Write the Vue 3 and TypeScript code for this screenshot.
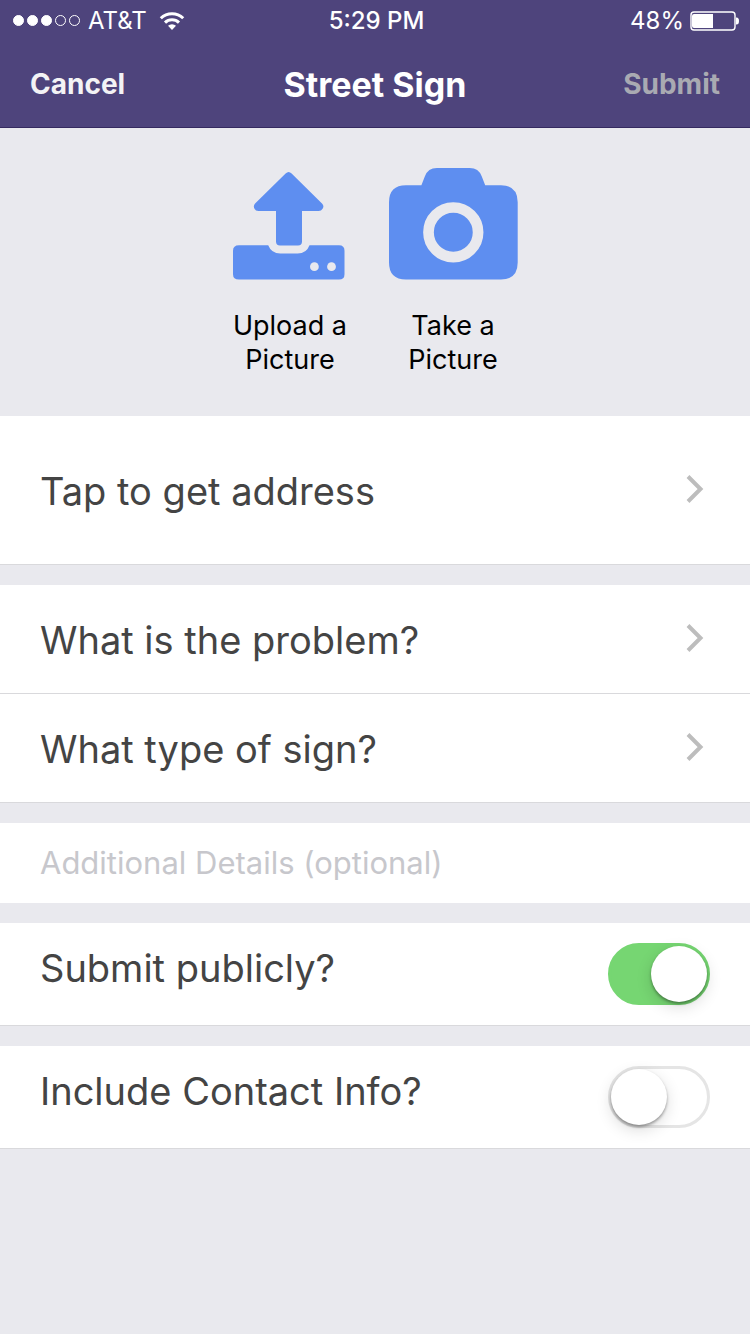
<script setup lang="ts">
import { ref } from 'vue'

const fields = [
  ['Tap to get address'],
  ['What is the problem?', 'What type of sign?'],
]
const signal = [true, true, true, false, false]
const details = ref('')
const isPublic = ref(true)
const includeContact = ref(false)
</script>

<template>
  <div class="screen">
    <header class="top">
      <div class="status">
        <div class="carrier">
          <span class="dots"><i v-for="(on, n) in signal" :key="n" :class="{ on }"></i></span>
          <span>AT&amp;T</span>
          <svg class="wifi" viewBox="0 0 26 20" width="26" height="20" aria-hidden="true">
            <g fill="none" stroke="#fff" stroke-width="3">
              <path d="M1.800 7.200a16 16 0 0 1 22.400 0" />
              <path d="M6 11.600a10 10 0 0 1 14 0" />
            </g>
            <path d="M13 19l-4-4.200a5.800 5.800 0 0 1 8 0z" fill="#fff" />
          </svg>
        </div>
        <div class="time">5:29 PM</div>
        <div class="power">
          <span>48%</span>
          <svg viewBox="0 0 50 20" width="50" height="20" aria-hidden="true">
            <rect x="1" y="1" width="44" height="18" rx="3" fill="none" stroke="#fff" stroke-width="1.400" />
            <path d="M4 3h19v14H4a2 2 0 0 1-2-2V5a2 2 0 0 1 2-2z" fill="#fff" />
            <path d="M46 6.500h.5a2.500 3.500 0 0 1 0 7H46z" fill="#fff" />
          </svg>
        </div>
      </div>
      <nav class="nav">
        <button type="button" class="cancel">Cancel</button>
        <h1>Street Sign</h1>
        <button type="button" class="submit" disabled>Submit</button>
      </nav>
    </header>

    <section class="photos">
      <button type="button" class="photo">
        <svg viewBox="232 168 116 112" width="116" height="112" fill="#5e8ef0" aria-hidden="true">
          <path d="M285.600 173.600q3-3 6 0L322 203.600q2.500 2.600.6 5.200-1.300 2.200-4 2.200H302v30.500q0 4-4 4h-18q-4 0-4-4V211h-17.500q-3 0-4-2.200-1.600-2.600.6-5.200z" />
          <path d="M239 245.300h29.200q3.300 8.300 12 8.300h17.500q8.700 0 11.800-8.300h29.500q5.500 0 5.500 5.500v23.500q0 5.300-5.500 5.300H239q-6 0-6-5.300v-23.500q0-5.500 6-5.500z" />
          <circle cx="314.400" cy="266.700" r="4.400" fill="#e9e9ee" />
          <circle cx="331.500" cy="266.700" r="4.400" fill="#e9e9ee" />
        </svg>
        <span>Upload a<br />Picture</span>
      </button>
      <button type="button" class="photo">
        <svg viewBox="388 168 130 112" width="130" height="112" fill="#5e8ef0" aria-hidden="true">
          <path d="M406 185.200h15.400l3.400-8.800q3.200-8.400 12-8.400h33q8.800 0 12 8.400l3.400 8.800H501q16.700 0 16.700 17v60.400q0 17-16.700 17h-95q-17 0-17-17v-60.400q0-17 17-17z" />
          <circle cx="453.300" cy="232.300" r="24.800" fill="none" stroke="#e9e9ee" stroke-width="10.700" />
        </svg>
        <span>Take a<br />Picture</span>
      </button>
    </section>

    <form class="groups" @submit.prevent>
      <div v-for="(group, g) in fields" :key="g" class="group" :class="{ address: g === 0 }">
        <button v-for="label in group" :key="label" type="button" class="row">
          <span>{{ label }}</span>
          <svg viewBox="0 0 18 30" width="18" height="30" aria-hidden="true">
            <path d="M2 1.500L14.500 14 2 26.500" fill="none" stroke="#bdbdbd" stroke-width="4" />
          </svg>
        </button>
      </div>
      <input v-model="details" class="details" type="text" placeholder="Additional Details (optional)" aria-label="Additional Details (optional)" />
      <label class="toggle">
        <span>Submit publicly?</span>
        <input v-model="isPublic" type="checkbox" role="switch" />
      </label>
      <label class="toggle">
        <span>Include Contact Info?</span>
        <input v-model="includeContact" type="checkbox" role="switch" />
      </label>
    </form>
  </div>
</template>

<style>
body {
  background: #e9e9ee;
}
</style>

<style scoped>
.screen {
  min-height: 100vh;
  background: #e9e9ee;
  font-family: Inter, Roboto, sans-serif;
  color: #444;
}
button {
  border: 0;
  padding: 0;
  background: none;
  font: inherit;
  color: inherit;
}
svg {
  display: block;
  flex: none;
}
.top {
  background: #4e447c;
  color: #fff;
  border-bottom: 1px solid #352a60;
}
.status {
  display: grid;
  grid-template-columns: 1fr auto 1fr;
  align-items: center;
  height: 41px;
  padding: 0 10px 0 13px;
  font-size: 24px;
}
.carrier,
.power {
  display: flex;
  align-items: center;
}
.carrier {
  gap: 8px;
}
.wifi {
  margin-left: 4px;
}
.power {
  justify-content: flex-end;
  gap: 6px;
}
.time {
  font-weight: 500;
}
.dots {
  display: flex;
  gap: 3px;
}
.dots i {
  box-sizing: border-box;
  width: 11px;
  height: 11px;
  border: 1px solid #fff;
  border-radius: 50%;
}
.dots .on {
  background: #fff;
}
.nav {
  display: grid;
  grid-template-columns: 1fr auto 1fr;
  align-items: center;
  height: 86px;
  padding: 0 30px;
  font-size: 28px;
  font-weight: 700;
}
.nav h1 {
  margin: 0;
  font-size: 34px;
  font-weight: 700;
}
.nav .cancel {
  justify-self: start;
  color: #f3f3f5;
}
.nav .submit {
  justify-self: end;
  color: #a9aab2;
}
.photos {
  display: flex;
  justify-content: center;
  gap: 40px;
  padding: 40px 20px 39px;
}
.photo {
  display: flex;
  flex-direction: column;
  align-items: center;
  gap: 29px;
  font-size: 27px;
  line-height: 34px;
  color: #000;
}
.groups {
  display: flex;
  flex-direction: column;
  gap: 20px;
}
.row,
.toggle {
  box-sizing: border-box;
  display: flex;
  justify-content: space-between;
  width: 100%;
  padding: 0 40px;
  background: #fff;
  border-bottom: 1px solid #d9d9dc;
  font-size: 38px;
  line-height: 50px;
  text-align: left;
}
.row {
  align-items: center;
  padding: 30px 46px 28px 40px;
}
.row svg {
  margin-bottom: 2px;
}
.address .row {
  padding-top: 50px;
  padding-bottom: 48px;
}
.details {
  box-sizing: border-box;
  width: 100%;
  height: 80px;
  padding: 0 40px 2px;
  border: 0;
  background: #fff;
  font: 400 31px Inter, Roboto, sans-serif;
  color: #444;
}
.details::placeholder {
  color: #c7c7cc;
  opacity: 1;
}
.toggle {
  padding: 20px 40px;
}
.toggle input {
  appearance: none;
  box-sizing: border-box;
  width: 102px;
  height: 62px;
  margin: 0;
  border: 3px solid #e5e5e5;
  border-radius: 31px;
  background: #fff;
}
.toggle input::before {
  content: '';
  display: block;
  width: 56px;
  height: 56px;
  border-radius: 50%;
  background: #fff;
  box-shadow: 0 2px 3px rgba(0, 0, 0, 0.35), 0 5px 16px rgba(0, 0, 0, 0.14);
}
.toggle input:checked {
  border-color: #76d672;
  background: #76d672;
}
.toggle input:checked::before {
  margin-left: auto;
}
</style>
